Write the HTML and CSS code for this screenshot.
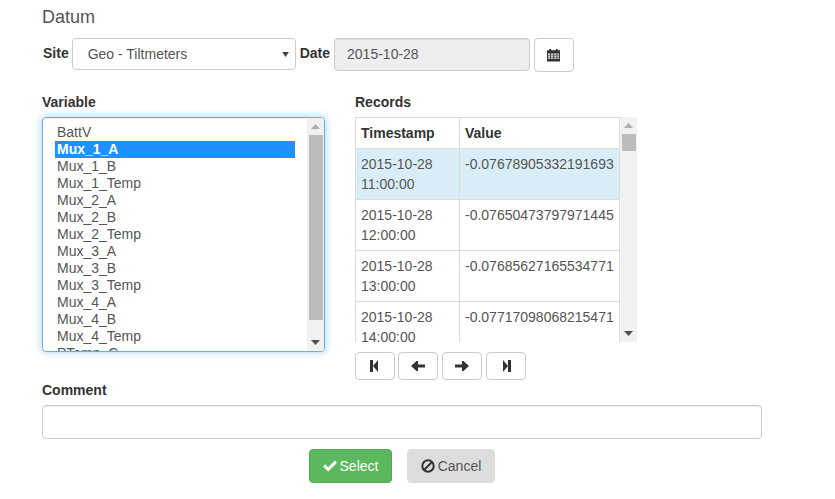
FILE: index.html
```html
<!DOCTYPE html>
<html lang="en">
<head>
<meta charset="utf-8">
<title>Datum</title>
<link rel="stylesheet" href="styles.css">
</head>
<body>
<main class="page">
  <h4 class="title">Datum</h4>
  <div class="site-row">
    <label class="lbl">Site</label>
    <div class="select"><span>Geo - Tiltmeters</span>
      <svg class="caret" width="7" height="5" viewBox="0 0 8 6"><path d="M0 0h8L4 6z" fill="#444"/></svg>
    </div>
    <label class="lbl">Date</label>
    <div class="date-input">2015-10-28</div>
    <button class="btn cal-btn" type="button">
      <svg class="cal-icon" width="13" height="14" viewBox="0 0 14 14"><path fill="#333" d="M0 2h2.500V.5h2V2h5V.5h2V2H14v12H0zM1 5.500v1.200h2.300V5.500zm3.200 0v1.200h2.600V5.500zm3.500 0v1.200h2.600V5.500zm3.400 0v1.200H13V5.500zM1 7.600v1.300h2.300V7.600zm3.200 0v1.300h2.600V7.600zm3.500 0v1.300h2.600V7.600zm3.400 0v1.300H13V7.600zM1 9.800v1.300h2.300V9.800zm3.200 0v1.300h2.600V9.800zm3.500 0v1.300h2.600V9.800zm3.400 0v1.300H13V9.800z"/></svg>
    </button>
  </div>
  <div class="columns">
    <section class="var-col">
      <label class="lbl block">Variable</label>
      <div class="listbox">
        <ul class="options">
          <li>BattV</li>
          <li class="selected">Mux_1_A</li>
          <li>Mux_1_B</li>
          <li>Mux_1_Temp</li>
          <li>Mux_2_A</li>
          <li>Mux_2_B</li>
          <li>Mux_2_Temp</li>
          <li>Mux_3_A</li>
          <li>Mux_3_B</li>
          <li>Mux_3_Temp</li>
          <li>Mux_4_A</li>
          <li>Mux_4_B</li>
          <li>Mux_4_Temp</li>
          <li>PTemp_C</li>
        </ul>
        <div class="scrollbar">
          <svg class="arrow" width="9" height="5" viewBox="0 0 9 5"><path d="M0 5h9L4.500 0z" fill="#b0b0b0"/></svg>
          <div class="thumb thumb-list"></div>
          <div class="spacer"></div>
          <svg class="arrow" width="9" height="5" viewBox="0 0 9 5"><path d="M0 0h9L4.500 5z" fill="#505050"/></svg>
        </div>
      </div>
    </section>
    <section class="rec-col">
      <label class="lbl block">Records</label>
      <div class="records">
        <div class="table-clip">
          <table>
            <thead><tr><th class="c1">Timestamp</th><th>Value</th></tr></thead>
            <tbody>
              <tr class="active"><td>2015-10-28 11:00:00</td><td>-0.07678905332191693</td></tr>
              <tr><td>2015-10-28 12:00:00</td><td>-0.07650473797971445</td></tr>
              <tr><td>2015-10-28 13:00:00</td><td>-0.07685627165534771</td></tr>
              <tr><td>2015-10-28 14:00:00</td><td>-0.07717098068215471</td></tr>
            </tbody>
          </table>
        </div>
        <div class="scrollbar">
          <svg class="arrow" width="9" height="5" viewBox="0 0 9 5"><path d="M0 5h9L4.500 0z" fill="#b0b0b0"/></svg>
          <div class="thumb thumb-rec"></div>
          <div class="spacer"></div>
          <svg class="arrow" width="9" height="5" viewBox="0 0 9 5"><path d="M0 0h9L4.500 5z" fill="#505050"/></svg>
        </div>
      </div>
      <div class="pager">
        <button class="btn page-btn" type="button"><svg class="nudge-l" width="8" height="12" viewBox="0 0 8 12"><path fill="#333" d="M0 0h3v12H0zM3 6l5-6v12z"/></svg></button>
        <button class="btn page-btn" type="button"><svg width="14" height="10" viewBox="0 0 14 10"><path fill="#333" d="M0 5L5.500 0H7v3.500h7v3H7V10H5.500z"/></svg></button>
        <button class="btn page-btn" type="button"><svg width="14" height="10" viewBox="0 0 14 10"><path fill="#333" d="M14 5L8.500 0H7v3.500H0v3h7V10h1.500z"/></svg></button>
        <button class="btn page-btn" type="button"><svg class="nudge-r" width="8" height="12" viewBox="0 0 8 12"><path fill="#333" d="M8 0H5v12h3zM5 6L0 0v12z"/></svg></button>
      </div>
    </section>
  </div>
  <label class="lbl block comment-lbl">Comment</label>
  <div class="comment"></div>
  <div class="actions">
    <button class="btn primary" type="button">
      <svg width="14" height="12" viewBox="0 0 14 12"><path fill="#fff" d="M0 6.500L2.200 4.300 5.200 7.300 11.800.5 14 2.700 5.200 11.500z"/></svg>Select
    </button>
    <button class="btn cancel" type="button">
      <svg width="14" height="14" viewBox="0 0 14 14"><circle cx="7" cy="7" r="5.700" fill="none" stroke="#333" stroke-width="2"/><path d="M3 11L11 3" stroke="#333" stroke-width="2"/></svg>Cancel
    </button>
  </div>
</main>
</body>
</html>
```

FILE: styles.css
```css
* { box-sizing: border-box; }
html, body { margin: 0; background: #fff; }
body {
  font-family: "Liberation Sans", Arial, sans-serif;
  font-size: 14px;
  line-height: 20px;
  color: #333;
}
.page { width: 762px; margin-left: 42px; padding-top: 8px; }
.title { margin: 0 0 12px; font-size: 18px; font-weight: 400; line-height: 18px; color: #555; height: 18px; }
.lbl { font-weight: 700; font-size: 14px; color: #333; }
.block { display: block; height: 20px; line-height: 20px; }
.site-row { display: flex; align-items: flex-start; height: 33px; }
.site-row .lbl { line-height: 30px; }
.site-row .lbl:first-child { margin-left: 1px; margin-right: 3px; }
.select {
  width: 224px; height: 32px; padding-left: 15px;
  border: 1px solid #ccc; border-radius: 4px; background: #fff;
  color: #555; line-height: 30px;
  display: flex; align-items: center; justify-content: space-between;
}
.caret { margin-right: 6px; }
.select + .lbl { margin-left: 4px; margin-right: 4px; }
.date-input {
  width: 196px; height: 33px; padding-left: 12px;
  border: 1px solid #ccc; border-radius: 4px; background: #eee;
  color: #555; line-height: 31px;
  box-shadow: inset 0 1px 1px rgba(0,0,0,.075);
}
.btn {
  display: inline-flex; align-items: center; justify-content: center;
  border: 1px solid #ccc; border-radius: 4px; background: #fff;
  font: inherit; color: #333; padding: 0; margin: 0;
}
.cal-btn { width: 40px; height: 34px; margin-left: 4px; }
.cal-icon { margin-right: 1px; }
.columns { display: flex; margin-top: 21px; height: 288px; }
.var-col { width: 313px; }
.var-col .block { height: 25px; }
.rec-col .block { height: 25px; }
.rec-col { width: 282px; }
.listbox {
  width: 283px; height: 235px; display: flex; overflow: hidden;
  border: 1px solid #66afe9; border-radius: 4px; background: #fff;
  box-shadow: inset 0 1px 1px rgba(0,0,0,.075), 0 0 8px rgba(102,175,233,.6);
}
.options {
  flex: 1; margin: 0; padding: 6px 12px 0; list-style: none;
  height: 233px; overflow: hidden; color: #555; line-height: 17px;
}
.options li { padding-left: 2px; height: 17px; white-space: nowrap; }
.options .selected { background: #1e90ff; color: #fff; font-weight: 700; }
.scrollbar {
  width: 17px; flex: none; background: #f1f1f1;
  display: flex; flex-direction: column; align-items: center;
  padding: 6px 0;
}
.thumb { width: 14px; background: #bcbcbc; flex: none; }
.thumb-list { height: 185px; margin-top: 6px; }
.thumb-rec { height: 17px; margin-top: 6px; }
.spacer { flex: 1; }
.arrow { flex: none; }
.records { display: flex; height: 225px; }
.table-clip { width: 265px; height: 225px; overflow: hidden; }
table { border-collapse: collapse; width: 265px; table-layout: fixed; }
th, td { border: 1px solid #ddd; padding: 5px; vertical-align: top; text-align: left; line-height: 20px; }
th { padding: 5px 5px 3px; height: 31px; line-height: 21px; color: #333; }
td { color: #555; }
.c1 { width: 104px; }
.active td { background: #d9edf7; }
.pager { display: flex; gap: 3px; margin-top: 10px; }
.page-btn { width: 40px; height: 28px; }
.page-btn:nth-child(n+3) { margin-left: 1px; }
.nudge-l { margin-right: 2px; }
.nudge-r { margin-left: 1px; }
.comment-lbl { height: 25px; }
.comment { width: 720px; height: 34px; border: 1px solid #ccc; border-radius: 4px; background: #fff; box-shadow: inset 0 1px 1px rgba(0,0,0,.075); }
.actions { display: flex; margin: 10px 0 0 267px; gap: 15px; }
.primary { width: 83px; height: 34px; background: #5cb85c; border-color: #4cae4c; color: #fff; gap: 3px; }
.cancel { width: 88px; height: 34px; background: #ddd; border-color: #ddd; color: #555; gap: 3px; }
```
